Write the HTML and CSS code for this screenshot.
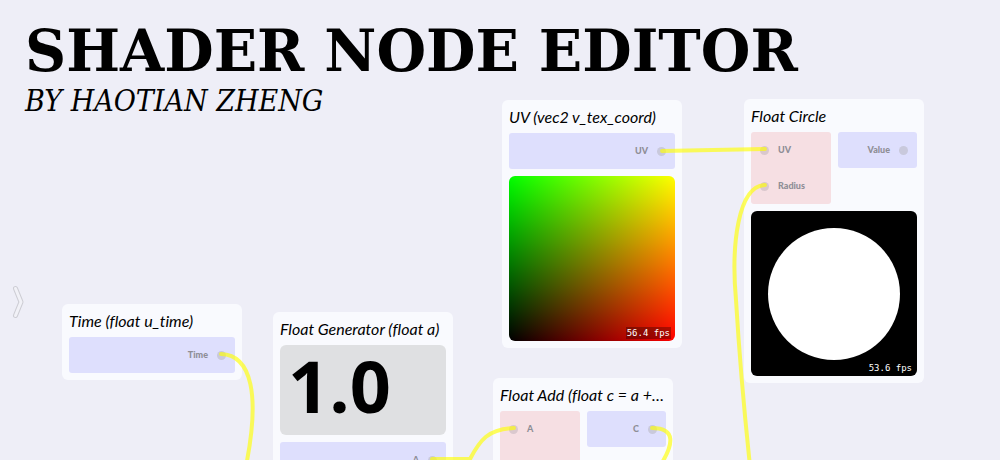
FILE: index.html
```html
<!DOCTYPE html>
<html lang="en">
<head>
<meta charset="utf-8">
<title>Shader Node Editor</title>
<link rel="stylesheet" href="styles.css">
</head>
<body>
<header class="masthead">
  <h1 class="masthead-title">SHADER NODE EDITOR</h1>
  <p class="masthead-author">BY HAOTIAN ZHENG</p>
</header>

<button class="drawer-toggle" type="button" aria-label="Open node library">
  <svg width="14" height="36" viewBox="0 0 14 36" aria-hidden="true">
    <path class="chevron-edge" d="M4.500 4.500L10 18L4.500 31.500"/>
    <path class="chevron-fill" d="M4.500 4.500L10 18L4.500 31.500"/>
  </svg>
</button>

<main class="canvas">
  <article class="node node-time">
    <h2 class="node-title">Time (float u_time)</h2>
    <div class="ports">
      <ul class="port-list outputs"><li class="port">Time<span class="dot"></span></li></ul>
    </div>
  </article>

  <article class="node node-generator">
    <h2 class="node-title">Float Generator (float a)</h2>
    <input class="number" type="text" value="1.0" aria-label="Float value">
    <div class="ports">
      <ul class="port-list outputs"><li class="port">A<span class="dot"></span></li></ul>
    </div>
  </article>

  <article class="node node-uv">
    <h2 class="node-title">UV (vec2 v_tex_coord)</h2>
    <div class="ports">
      <ul class="port-list outputs"><li class="port">UV<span class="dot"></span></li></ul>
    </div>
    <div class="preview preview-uv"><span class="fps">56.4 fps</span></div>
  </article>

  <article class="node node-add">
    <h2 class="node-title">Float Add (float c = a +…</h2>
    <div class="ports">
      <ul class="port-list inputs">
        <li class="port"><span class="dot"></span>A</li>
        <li class="port"><span class="dot"></span></li>
      </ul>
      <ul class="port-list outputs"><li class="port">C<span class="dot"></span></li></ul>
    </div>
  </article>

  <article class="node node-circle">
    <h2 class="node-title">Float Circle</h2>
    <div class="ports">
      <ul class="port-list inputs">
        <li class="port"><span class="dot"></span>UV</li>
        <li class="port"><span class="dot"></span>Radius</li>
      </ul>
      <ul class="port-list outputs"><li class="port">Value<span class="dot"></span></li></ul>
    </div>
    <div class="preview preview-circle"><span class="disc"></span><span class="fps">53.6 fps</span></div>
  </article>

  <svg class="links" aria-hidden="true">
    <path d="M221 354C252 355 260 396 246 466"/>
    <path d="M432 459H470C480 440 488 429 514 428"/>
    <path d="M652 428C676 428 674 444 660 466"/>
    <path d="M662 151L765 149"/>
    <path d="M765 185C738 186 731 245 736 300C739 350 743 400 750 466"/>
  </svg>
</main>
</body>
</html>
```
FILE: styles.css
```css
* {
  box-sizing: border-box;
}

body {
  margin: 0;
  min-height: 100vh;
  overflow: hidden;
  position: relative;
  background: #eeeef7;
  color: #000;
  font-family: Lato, "Open Sans", sans-serif;
}

.masthead {
  padding: 17px 25px 0;
  font-family: "DejaVu Serif", serif;
}

.masthead-title {
  margin: 0;
  font-size: 57px;
  line-height: 68px;
  font-weight: 700;
  white-space: nowrap;
}

.masthead-author {
  margin: 0;
  font-family: "DejaVu Serif Condensed", "DejaVu Serif", serif;
  font-size: 30px;
  line-height: 32px;
  font-style: italic;
}

.drawer-toggle {
  position: absolute;
  left: 11px;
  top: 284px;
  padding: 0;
  border: 0;
  background: none;
}

.drawer-toggle svg {
  display: block;
}

.chevron-edge,
.chevron-fill {
  fill: none;
  stroke-linecap: round;
  stroke-linejoin: round;
}

.chevron-edge {
  stroke: #cdcdd4;
  stroke-width: 5;
}

.chevron-fill {
  stroke: #f1f1f7;
  stroke-width: 3;
}

.canvas {
  position: absolute;
  inset: 0;
  overflow: hidden;
}

.node {
  position: absolute;
  display: flex;
  flex-direction: column;
  gap: 7px;
  width: 180px;
  padding: 0 7px 7px;
  border-radius: 6px;
  background: #f9fafe;
}

.node-time { left: 62px; top: 304px; }
.node-generator { left: 273px; top: 312px; }
.node-uv { left: 502px; top: 100px; }
.node-add { left: 493px; top: 378px; }
.node-circle { left: 744px; top: 99px; }

.node-title {
  margin: 0;
  padding-top: 7px;
  font: italic 400 16px/19px Lato, sans-serif;
  font-variant-ligatures: none;
  white-space: nowrap;
  overflow: hidden;
  text-overflow: ellipsis;
}

.ports {
  display: flex;
  align-items: flex-start;
  gap: 7px;
}

.port-list {
  flex: 1;
  margin: 0;
  padding: 0;
  list-style: none;
  border-radius: 3px;
}

.inputs {
  background: #f6dfe3;
}

.outputs {
  background: #dedffd;
}

.port {
  display: flex;
  align-items: center;
  gap: 9px;
  height: 36px;
  padding: 0 9px;
  color: #8e8e96;
  font: 900 9px/12px Lato, sans-serif;
}

.outputs .port {
  justify-content: flex-end;
}

.dot {
  width: 9px;
  height: 9px;
  border-radius: 50%;
  background: #c9c9dc;
}

.inputs .dot {
  background: #dac8ce;
}

.number {
  width: 100%;
  height: 90px;
  padding: 0 8px 10px;
  border: 0;
  border-radius: 6px;
  background: #dfe0e2;
  color: #000;
  font: 700 72px/80px "Open Sans", sans-serif;
}

.preview {
  position: relative;
  display: flex;
  align-items: center;
  justify-content: center;
  height: 165px;
  border-radius: 6px;
  overflow: hidden;
  background: #000;
}

.preview-uv {
  background:
    linear-gradient(to right, #000, #f00),
    linear-gradient(to top, #000, #0f0);
  background-blend-mode: screen;
}

.disc {
  width: 132px;
  height: 132px;
  border-radius: 50%;
  background: #fff;
}

.fps {
  position: absolute;
  right: 4px;
  bottom: 2px;
  padding: 0 1px;
  background: rgba(0, 0, 0, 0.3);
  color: #fff;
  font: 9px/12px "DejaVu Sans Mono", monospace;
}

.links {
  position: absolute;
  left: 0;
  top: 0;
  width: 100%;
  height: 100%;
  pointer-events: none;
}

.links path {
  fill: none;
  stroke: rgba(255, 255, 0, 0.64);
  stroke-width: 4;
  stroke-linecap: round;
}
```
